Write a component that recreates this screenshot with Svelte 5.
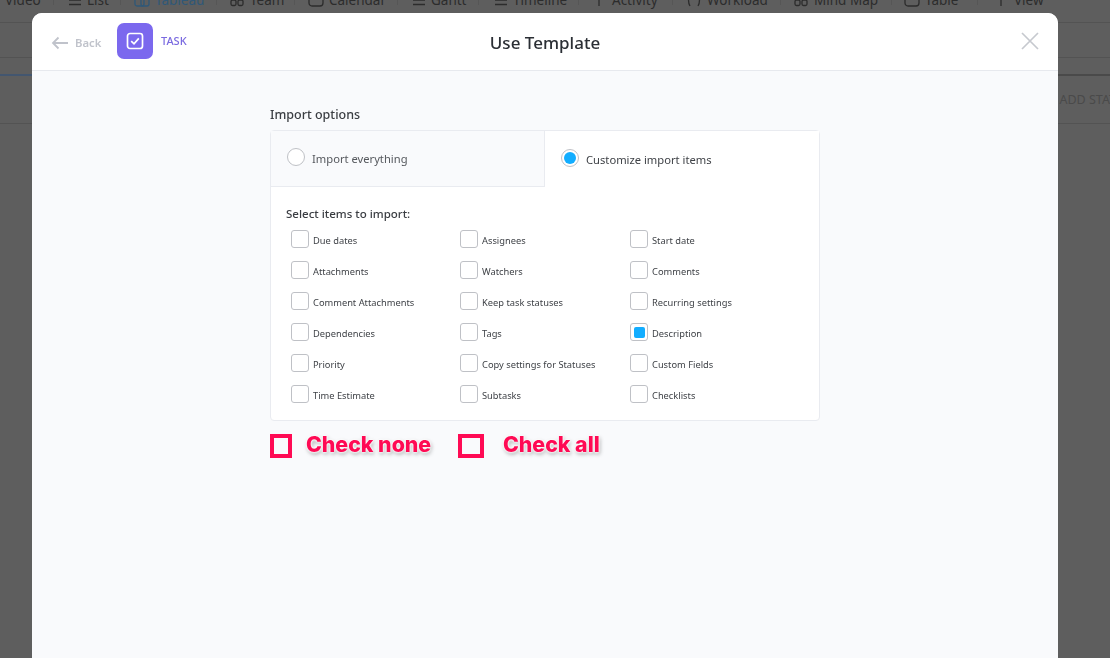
<script lang="ts">
const tabs = [
  { label: 'Video', icon: 'none', width: 54, pad: 5 },
  { label: 'List', icon: 'lines', width: 67, pad: 12 },
  { label: 'Tableau', icon: 'board', width: 96, pad: 13 },
  { label: 'Team', icon: 'team', width: 78, pad: 12 },
  { label: 'Calendar', icon: 'box', width: 103, pad: 13 },
  { label: 'Gantt', icon: 'lines', width: 81, pad: 12 },
  { label: 'Timeline', icon: 'lines', width: 100, pad: 13 },
  { label: 'Activity', icon: 'pulse', width: 94, pad: 12 },
  { label: 'Workload', icon: 'braces', width: 108, pad: 13 },
  { label: 'Mind Map', icon: 'team', width: 111, pad: 12 },
  { label: 'Table', icon: 'box', width: 86, pad: 12 },
  { label: 'View', icon: 'pulse', width: 132, pad: 15 },
];

const items = [
  ['Due dates', 'Assignees', 'Start date'],
  ['Attachments', 'Watchers', 'Comments'],
  ['Comment Attachments', 'Keep task statuses', 'Recurring settings'],
  ['Dependencies', 'Tags', 'Description'],
  ['Priority', 'Copy settings for Statuses', 'Custom Fields'],
  ['Time Estimate', 'Subtasks', 'Checklists'],
].flat();

let selected = $state(['Description']);
let mode = $state('custom');

function toggle(name: string) {
  selected = selected.includes(name)
    ? selected.filter((s) => s !== name)
    : [...selected, name];
}
</script>

<div class="page">
  <nav class="tabs">
    {#each tabs as tab}
      <div class="tab" class:active={tab.label === 'Tableau'} style="width:{tab.width}px;padding-left:{tab.pad}px">
        {#if tab.icon !== 'none'}
          <svg class="tab-icon" width="16" height="16" viewBox="0 0 16 16" fill="none" stroke="currentColor" stroke-width="1.3">
            {#if tab.icon === 'lines'}
              <path d="M3 3h12M3 8h12M3 12.5h12" />
            {:else if tab.icon === 'board'}
              <rect x="1" y="2" width="9" height="12" rx="2" /><rect x="7" y="6" width="8" height="8" rx="2" />
            {:else if tab.icon === 'team'}
              <rect x="2" y="8" width="5" height="5.5" rx="1.5" /><rect x="9" y="8" width="5" height="5.5" rx="1.5" />
            {:else if tab.icon === 'box'}
              <rect x="1" y="2" width="14" height="12" rx="3" />
            {:else if tab.icon === 'braces'}
              <path d="M4 2C2 5 2 11 4 14M12 2c2 3 2 9 0 12" />
            {:else}
              <path d="M8 1v13" />
            {/if}
          </svg>
        {/if}
        <span>{tab.label}</span>
      </div>
    {/each}
  </nav>
  <div class="bar"></div>
  <div class="bar accent"></div>
  <div class="status-row"><span>ADD STATUS</span></div>
</div>

<div class="modal">
  <header class="head">
    <div class="head-left">
      <button type="button" class="back">
        <svg width="18" height="14" viewBox="0 0 18 14" fill="none" stroke="currentColor" stroke-width="1.8">
          <path d="M17 7H2M7.5 1.5 2 7l5.5 5.5" />
        </svg>
        Back
      </button>
      <span class="badge">
        <svg width="18" height="18" viewBox="0 0 18 18" fill="none" stroke="#fff" stroke-width="1.7">
          <rect x="1.5" y="1.5" width="15" height="15" rx="2.5" />
          <path d="M5.2 9.2 8 11.8l4.8-5.4" />
        </svg>
      </span>
      <span class="kind">TASK</span>
    </div>
    <h1>Use Template</h1>
    <button type="button" class="close" aria-label="Close">
      <svg width="18" height="18" viewBox="0 0 18 18" fill="none" stroke="currentColor" stroke-width="1.7">
        <path d="M1 1l16 16M17 1 1 17" />
      </svg>
    </button>
  </header>

  <main class="body">
    <div class="panel">
      <h2>Import options</h2>
      <section class="card">
        <div class="choices">
          <button type="button" class="choice" class:off={mode !== 'all'} onclick={() => (mode = 'all')}>
            <span class="radio" class:on={mode === 'all'}></span>
            Import everything
          </button>
          <button type="button" class="choice" class:off={mode !== 'custom'} onclick={() => (mode = 'custom')}>
            <span class="radio" class:on={mode === 'custom'}></span>
            Customize import items
          </button>
        </div>
        <div class="select">
          <h3>Select items to import:</h3>
          <div class="grid">
            {#each items as item}
              <label class="item">
                <input type="checkbox" checked={selected.includes(item)} onchange={() => toggle(item)} />
                <span class="box"></span>
                <span>{item}</span>
              </label>
            {/each}
          </div>
        </div>
      </section>
      <div class="notes">
        <div class="note none"><span class="square"></span><span class="note-text">Check none</span></div>
        <div class="note all"><span class="square"></span><span class="note-text">Check all</span></div>
      </div>
    </div>
  </main>
</div>

<style>
  :global(body) {
    margin: 0;
    background: #5e5e5e;
    font-family: 'Noto Sans', 'Open Sans', sans-serif;
    overflow: hidden;
  }

  .page {
    height: 658px;
    overflow: hidden;
    background: #5e5e5e;
    color: #2a2a2a;
  }

  .tabs {
    display: flex;
    height: 23px;
    border-bottom: 1px solid #535353;
    overflow: hidden;
    box-sizing: border-box;
  }

  .tab {
    display: flex;
    align-items: center;
    gap: 5px;
    height: 10px;
    margin-top: -5px;
    box-sizing: border-box;
    border-right: 1px solid #565656;
    font-size: 13.5px;
    color: #2c2c2c;
    flex: none;
  }

  .tab:last-child {
    border-right: none;
  }

  .tab.active {
    color: #2f5878;
  }

  .tab-icon {
    flex: none;
    color: #2c2c2c;
  }

  .tab.active .tab-icon {
    color: #2f5878;
  }

  .bar {
    height: 35px;
    border-bottom: 1px solid #535353;
    box-sizing: border-box;
  }

  .bar.accent {
    height: 18px;
    border-bottom: 2px solid #4a4a4a;
    box-sizing: border-box;
    position: relative;
  }

  .bar.accent::before {
    content: '';
    position: absolute;
    left: 0;
    bottom: -2px;
    width: 32px;
    height: 2px;
    background: #43566f;
  }

  .status-row {
    height: 48px;
    border-bottom: 1px solid #535353;
    display: flex;
    justify-content: flex-end;
    align-items: center;
    box-sizing: border-box;
    font-size: 12.5px;
    color: #4a4a4a;
    white-space: nowrap;
    overflow: hidden;
  }

  .status-row span {
    margin-right: -22px;
  }

  .modal {
    position: fixed;
    left: 32px;
    top: 13px;
    width: 1026px;
    height: 645px;
    display: flex;
    flex-direction: column;
    background: #f9fafc;
    border-radius: 10px 10px 0 0;
    overflow: hidden;
  }

  .head {
    flex: none;
    height: 58px;
    box-sizing: border-box;
    padding: 0 19px 0 20px;
    display: flex;
    align-items: center;
    justify-content: space-between;
    position: relative;
    background: #fff;
    border-bottom: 1px solid #e7e9ee;
    color: #2a2e34;
  }

  .head-left {
    display: flex;
    align-items: center;
    margin-top: -1px;
  }

  .back {
    display: flex;
    align-items: center;
    gap: 6px;
    width: 65px;
    padding: 3px 0 0;
    border: none;
    background: none;
    font: 600 11.3px 'Noto Sans', sans-serif;
    color: #c0c3cb;
  }

  .back svg {
    margin-left: -1px;
  }

  .badge {
    width: 36px;
    height: 36px;
    border-radius: 7px;
    background: #7b68ee;
    display: flex;
    align-items: center;
    justify-content: center;
  }

  .kind {
    margin-left: 8px;
    margin-top: -2px;
    font-size: 11px;
    font-weight: 500;
    color: #7a6ae0;
  }

  h1 {
    position: absolute;
    left: 0;
    right: 0;
    top: 18px;
    margin: 0;
    text-align: center;
    font-size: 17px;
    line-height: 24px;
    font-weight: 500;
  }

  .close {
    display: flex;
    padding: 0;
    margin-top: -1px;
    border: none;
    background: none;
    color: #c6c9cf;
  }

  .body {
    flex: 1;
    display: flex;
    justify-content: center;
    padding-top: 34px;
    box-sizing: border-box;
  }

  .panel {
    width: 550px;
  }

  h2 {
    margin: 0 0 5px;
    font-size: 12.5px;
    line-height: 20px;
    font-weight: 500;
    color: #3a3d42;
  }

  .card {
    height: 291px;
    box-sizing: border-box;
    background: #fff;
    border: 1px solid #e9ebf0;
    border-radius: 4px;
  }

  .choices {
    display: grid;
    grid-template-columns: 274px 1fr;
    height: 56px;
  }

  .choice {
    display: flex;
    align-items: center;
    gap: 7px;
    padding: 0 0 0 16px;
    border: none;
    background: #fff;
    font: 11.2px 'Noto Sans', sans-serif;
    color: #3f4247;
    text-align: left;
  }

  .choice.off {
    background: #f9fafc;
    border-right: 1px solid #e9ebf0;
    border-bottom: 1px solid #e9ebf0;
    color: #55585d;
  }

  .radio {
    width: 18px;
    height: 18px;
    box-sizing: border-box;
    flex: none;
    border: 1px solid #bfc1c6;
    border-radius: 50%;
    background: #fff;
    display: flex;
    align-items: center;
    justify-content: center;
    margin-top: -3px;
  }

  .radio.on::after {
    content: '';
    width: 12px;
    height: 12px;
    border-radius: 50%;
    background: #12adff;
  }

  .select {
    padding: 17px 15px 0;
  }

  h3 {
    margin: 0 0 1px;
    font-size: 11.5px;
    line-height: 20px;
    font-weight: 500;
    color: #3a3d42;
  }

  .grid {
    display: grid;
    grid-template-columns: 169px 170px 1fr;
    grid-auto-rows: 31px;
    padding-left: 5px;
  }

  .item {
    display: flex;
    align-items: center;
    gap: 4px;
    font-size: 9.3px;
    color: #3f4247;
    white-space: nowrap;
  }

  .item input {
    position: absolute;
    opacity: 0;
    width: 0;
    height: 0;
  }

  .box {
    width: 18px;
    height: 18px;
    box-sizing: border-box;
    flex: none;
    border: 1px solid #bfc1c6;
    border-radius: 3px;
    background: #fff;
    display: flex;
    align-items: center;
    justify-content: center;
    margin-top: -3px;
  }

  input:checked + .box::after {
    content: '';
    width: 11px;
    height: 11px;
    border-radius: 2px;
    background: #12adff;
  }

  .notes {
    display: flex;
    margin-top: 13px;
  }

  .note {
    display: flex;
    align-items: flex-start;
  }

  .note.none {
    width: 188px;
    gap: 14px;
  }

  .note.all {
    gap: 19px;
  }

  .square {
    box-sizing: border-box;
    width: 22px;
    height: 24px;
    border: 4px solid #ff0a54;
    flex: none;
  }

  .note.all .square {
    width: 26px;
  }

  .note-text {
    font-family: Inter, sans-serif;
    font-size: 21.3px;
    line-height: 20px;
    font-weight: 800;
    color: #ff0a54;
    white-space: nowrap;
    text-shadow: 0 0 2px #fff, 0 0 3px #fff, 0 0 3px #fff, 1px 2px 4px rgba(0, 0, 0, 0.4);
  }
</style>
